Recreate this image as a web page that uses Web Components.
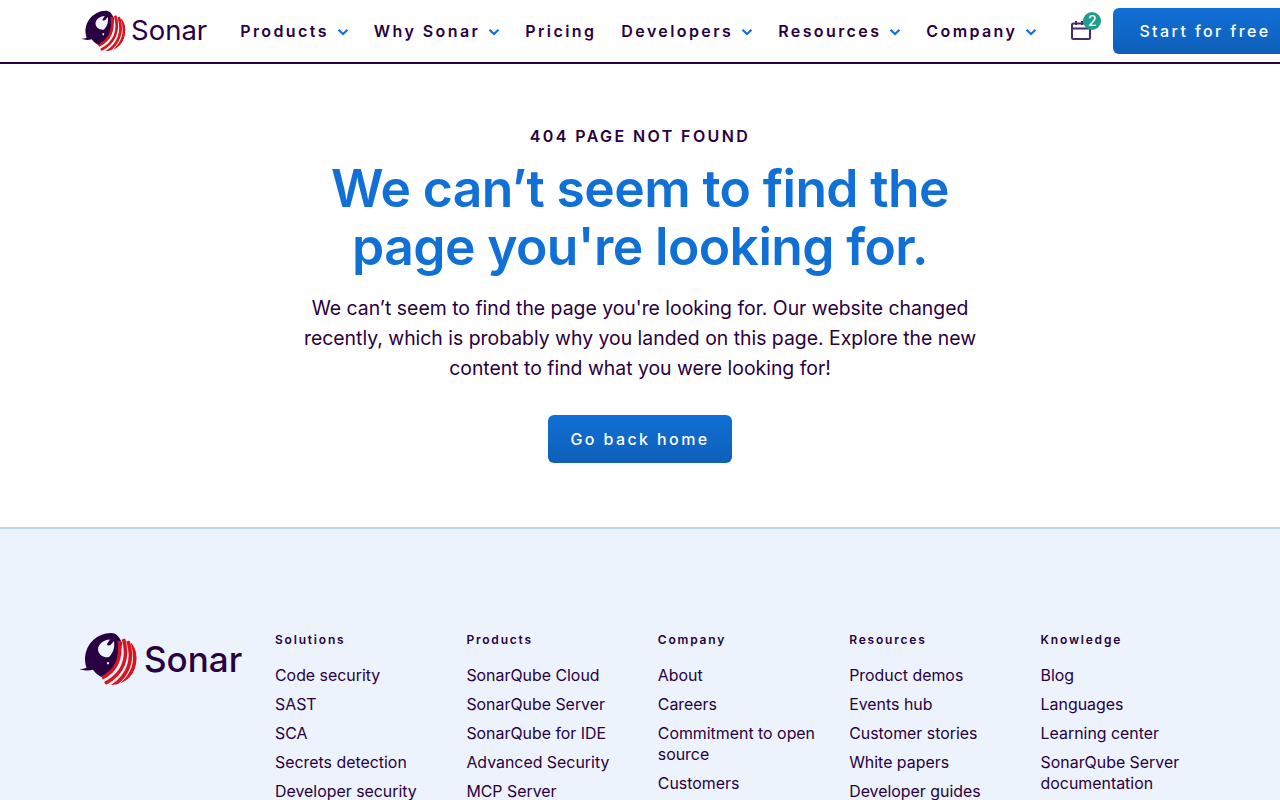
<!DOCTYPE html>
<html lang="en">
<head>
<meta charset="utf-8">
<title>Sonar - 404</title>
<style>
  html, body { margin: 0; padding: 0; background: #fff; overflow-x: hidden; }
  body { font-family: Inter, "Liberation Sans", sans-serif; color: #290042; }
</style>
</head>
<body>
<site-header></site-header>
<not-found>
  <span slot="eyebrow">404 PAGE NOT FOUND</span>
  <span slot="title">We can’t seem to find the page you're looking for.</span>
  We can’t seem to find the page you're looking for. Our website changed recently, which is probably why you landed on this page. Explore the new content to find what you were looking for!
</not-found>
<site-footer></site-footer>

<script>
const logoMark = `
  <svg viewBox="0 0 62 62" aria-hidden="true">
    <clipPath id="disc"><circle cx="33" cy="31" r="26"/></clipPath>
    <path fill="#290042" d="M33 5A26 26 0 0 0 8.500 39.700C6.500 40.400 4 41 1.500 41 5.500 42.600 10.500 43 15 41.800 18 46 22 49 26 50 36 44 42 33 44 15 41 8 38 5 33 5z"/>
    <path fill="#eef3fc" d="M20 22C20 16 25 12 32 11.500L29 16C29.500 18 31.500 18 33 16.500L36 13C37 20 35 25 31 29 27 30 21 28 20 22z"/>
    <path fill="#eef3fc" d="M30 34a1.200 1.200 0 1 0 .01 0z"/>
    <g fill="none" stroke="#d5161f" stroke-width="3.600" clip-path="url(#disc)">
      <path d="M41 13C44 30 38 43 24 50"/>
      <path d="M45.500 11C51 30 45 46 27 55.500"/>
      <path d="M50 13C56 31 51 48 33 59"/>
      <path d="M54.500 15C60 34 56 46 41 59"/>
    </g>
  </svg>`;

class BrandLogo extends HTMLElement {
  connectedCallback() {
    this.attachShadow({ mode: 'open' });
    this.shadowRoot.innerHTML = `
      <style>
        :host { display: inline-flex; align-items: center; color: #290042; gap: var(--logo-gap, 3px); }
        svg { width: var(--mark, 48px); height: var(--mark, 48px); display: block; flex: none; }
        span { font: var(--weight, 400) var(--word, 27.5px)/1 Inter, sans-serif; }
      </style>
      ${logoMark}<span>Sonar</span>`;
  }
}
customElements.define('brand-logo', BrandLogo);

class NavItem extends HTMLElement {
  connectedCallback() {
    this.attachShadow({ mode: 'open' });
    const caret = this.hasAttribute('menu') ? `
      <svg viewBox="0 0 12 8" width="12" height="8"><path d="M1.500 1.800 6 6l4.500-4.200" fill="none" stroke="#1170d6" stroke-width="2.200"/></svg>` : '';
    this.shadowRoot.innerHTML = `
      <style>
        :host { display: inline-flex; align-items: center; gap: 8px; font: 600 16px/20px Inter, sans-serif; letter-spacing: 2.4px; color: #290042; white-space: nowrap; }
        svg { margin-top: 2px; }
      </style>
      <slot></slot>${caret}`;
  }
}
customElements.define('nav-item', NavItem);

class SiteHeader extends HTMLElement {
  connectedCallback() {
    this.attachShadow({ mode: 'open' });
    this.shadowRoot.innerHTML = `
      <style>
        :host { display: block; height: 62px; border-bottom: 2px solid #290042; background: #fff; }
        .bar { display: flex; align-items: center; height: 62px; padding-left: 80px; width: 1300px; box-sizing: border-box; }
        nav { display: flex; align-items: center; gap: 25px; margin-left: 33px; }
        .cal { position: relative; margin-left: 33px; width: 24px; height: 24px; }
        .cal svg { display: block; }
        .badge { position: absolute; left: 13px; top: -7px; width: 18px; height: 18px; border-radius: 50%; background: #1f9e8b; color: #fff; font: 500 14px/18px Inter, sans-serif; text-align: center; }
        .cta { margin-left: 19px; height: 46px; padding: 0 26px; display: flex; align-items: center; border-radius: 6px; background: linear-gradient(#1170d6, #0e5fb8); color: #fff; font: 500 16px/1 Inter, sans-serif; letter-spacing: 2.4px; white-space: nowrap; }
      </style>
      <div class="bar">
        <brand-logo></brand-logo>
        <nav>
          <nav-item menu>Products</nav-item>
          <nav-item menu>Why Sonar</nav-item>
          <nav-item>Pricing</nav-item>
          <nav-item menu>Developers</nav-item>
          <nav-item menu>Resources</nav-item>
          <nav-item menu>Company</nav-item>
        </nav>
        <div class="cal">
          <svg viewBox="0 0 24 24" width="24" height="24" fill="none" stroke="#4a2a63" stroke-width="2">
            <rect x="2" y="4.500" width="18" height="15.500" rx="1.500"/>
            <path d="M2 9.500h18M6 2v4M12 2v4"/>
          </svg>
          <span class="badge">2</span>
        </div>
        <div class="cta">Start for free</div>
      </div>`;
  }
}
customElements.define('site-header', SiteHeader);

class NotFound extends HTMLElement {
  connectedCallback() {
    this.attachShadow({ mode: 'open' });
    this.shadowRoot.innerHTML = `
      <style>
        :host { display: flex; flex-direction: column; align-items: center; height: 463px; box-sizing: border-box; padding-top: 62px; text-align: center; color: #290042; }
        .eyebrow { font: 600 16px/20px Inter, sans-serif; letter-spacing: 2.4px; }
        h1 { margin: 13px 0 0; width: 660px; font: 600 51.6px/58px Inter, sans-serif; color: #1170d6; letter-spacing: -.6px; }
        p { margin: 18px 0 0; width: 700px; font: 400 19.4px/30px Inter, sans-serif; }
        a { margin-top: 32px; width: 184px; height: 48px; display: flex; align-items: center; justify-content: center; border-radius: 6px; background: linear-gradient(#1170d6, #0e5fb8); color: #fff; font: 500 16px/1 Inter, sans-serif; letter-spacing: 2.4px; }
      </style>
      <div class="eyebrow"><slot name="eyebrow"></slot></div>
      <h1><slot name="title"></slot></h1>
      <p><slot></slot></p>
      <a>Go back home</a>`;
  }
}
customElements.define('not-found', NotFound);

class FooterColumn extends HTMLElement {
  connectedCallback() {
    this.attachShadow({ mode: 'open' });
    const links = this.getAttribute('links').split('|').map(l => `<li>${l}</li>`).join('');
    this.shadowRoot.innerHTML = `
      <style>
        :host { display: block; }
        h4 { margin: 0 0 17px; font: 600 12px/16px Inter, sans-serif; letter-spacing: 1.8px; }
        ul { list-style: none; margin: 0; padding: 0; display: flex; flex-direction: column; gap: 8px; font: 400 15.9px/21px Inter, sans-serif; }
      </style>
      <h4>${this.getAttribute('title')}</h4>
      <ul>${links}</ul>`;
  }
}
customElements.define('footer-column', FooterColumn);

class SiteFooter extends HTMLElement {
  connectedCallback() {
    this.attachShadow({ mode: 'open' });
    this.shadowRoot.innerHTML = `
      <style>
        :host { display: block; background: #ecf3fc; border-top: 2px solid #b9d6f2; color: #290042; }
        .wrap { display: grid; grid-template-columns: 195px repeat(5, 1fr); padding: 103px 48px 60px 80px; }
        .wrap brand-logo { --mark: 62px; --word: 35px; --weight: 500; --logo-gap: 4px; align-self: start; margin: -4px 0 0 -2px; }
      </style>
      <div class="wrap">
        <brand-logo></brand-logo>
        <footer-column title="Solutions" links="Code security|SAST|SCA|Secrets detection|Developer security|Code quality"></footer-column>
        <footer-column title="Products" links="SonarQube Cloud|SonarQube Server|SonarQube for IDE|Advanced Security|MCP Server|Pricing"></footer-column>
        <footer-column title="Company" links="About|Careers|Commitment to open source|Customers|Partners"></footer-column>
        <footer-column title="Resources" links="Product demos|Events hub|Customer stories|White papers|Developer guides|Webinars"></footer-column>
        <footer-column title="Knowledge" links="Blog|Languages|Learning center|SonarQube Server documentation|Community"></footer-column>
      </div>`;
  }
}
customElements.define('site-footer', SiteFooter);
</script>
</body>
</html>
